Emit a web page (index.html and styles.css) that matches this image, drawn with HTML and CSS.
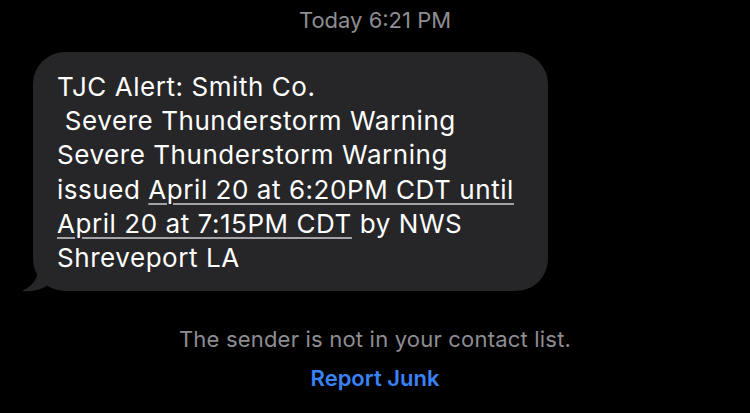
FILE: index.html
```html
<!DOCTYPE html>
<html lang="en">
<head>
    <meta charset="utf-8">
    <title>Messages</title>
    <link rel="stylesheet" href="styles.css">
</head>
<body>
    <div class="thread">
        <div class="stamp">Today 6:21 PM</div>

        <div class="row">
            <div class="bubble">
                <p>TJC Alert: Smith Co.<br>
                &nbsp;Severe Thunderstorm Warning<br>
                Severe Thunderstorm Warning<br>
                issued <span class="link">April 20 at 6:20PM CDT until<br>April 20 at 7:15PM CDT</span> by NWS<br>
                Shreveport LA</p>
                <!-- bubble tail -->
                <svg class="tail" width="30" height="24" viewBox="0 0 30 24">
                    <path d="M16 0 C16 10 12 17 0 23 C10 24 20 22 27 16 L27 0 Z" fill="#262628"/>
                </svg>
            </div>
        </div>

        <div class="notice">The sender is not in your contact list.</div>
        <div class="junk">Report Junk</div>
    </div>
</body>
</html>
```

FILE: styles.css
```css
body {
    margin: 0;
    padding: 0;
    background-color: #000;
    font-family: Inter, "Liberation Sans", sans-serif;
    color: #fff;
}

.thread {
    width: 750px;
    height: 413px;
    overflow: hidden;
}

.stamp {
    text-align: center;
    color: #8d8d92;
    font-size: 22px;
    line-height: 26px;
    padding-top: 7px;
    height: 27px;
}

.row {
    padding-top: 18px;
    padding-left: 33px;
}

.bubble {
    position: relative;
    width: 515px;
    height: 239px;
    box-sizing: border-box;
    background-color: #262628;
    border-radius: 32px;
    padding: 0 16px 0 24px;
}

.bubble p {
    margin: 0;
    padding-top: 18px;
    font-size: 26px;
    line-height: 34.2px;
    letter-spacing: 0.55px;
}

.link {
    text-decoration: underline;
    text-decoration-color: #a3a3a7;
    text-underline-offset: 4px;
    text-decoration-thickness: 2px;
}

.tail {
    position: absolute;
    left: -11px;
    bottom: -1px;
}

.notice {
    text-align: center;
    color: #8d8d92;
    font-size: 22px;
    line-height: 26px;
    margin-top: 35px;
    letter-spacing: 0.2px;
}

.junk {
    text-align: center;
    color: #3a82f7;
    font-size: 22px;
    line-height: 26px;
    font-weight: 600;
    margin-top: 13px;
}
```
